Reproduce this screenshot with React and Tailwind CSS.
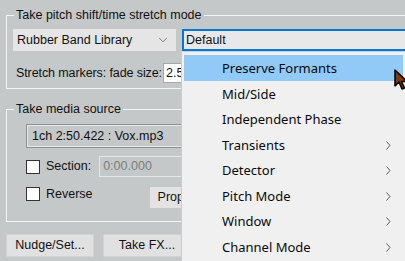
import { ChevronDown } from 'lucide-react';

const menuItems = [
  { label: 'Preserve Formants', active: true },
  { label: 'Mid/Side' },
  { label: 'Independent Phase' },
  { label: 'Transients', sub: true },
  { label: 'Detector', sub: true },
  { label: 'Pitch Mode', sub: true },
  { label: 'Window', sub: true },
  { label: 'Channel Mode', sub: true },
];

function SubArrow() {
  return (
    <svg width="5" height="9" viewBox="0 0 5 9" className="shrink-0">
      <path d="M0.5 0.5 L4 4.5 L0.5 8.5" fill="none" stroke="#5a5a5a" strokeWidth="1" />
    </svg>
  );
}

function CheckBox() {
  return <div className="w-[14px] h-[14px] shrink-0 bg-white border border-[#333]" />;
}

function PopupMenu() {
  return (
    <div className="absolute left-[181px] top-[51px] w-[226px] h-[215px] bg-[#f0f0f0] border border-[#cccccc] pt-[3px] pl-[2px] pr-[3px] font-['Noto_Sans',sans-serif] text-[13px] text-[#0a0a0a]">
      {menuItems.map((m) => (
        <div key={m.label}
          className={`h-[25.5px] flex items-center justify-between pl-[38px] pr-[12px] pt-[2px] leading-none ${m.active ? 'bg-[#91c9f7]' : ''}`}>
          <span>{m.label}</span>
          {m.sub && <SubArrow />}
        </div>
      ))}
    </div>
  );
}

function Cursor() {
  return (
    <svg width="14" height="22" viewBox="0 0 14 22" className="absolute left-[394px] top-[69px]">
      <path d="M1 1 L1 17 L5 13 L8 20 L10.5 19 L7.5 12.5 L13 12.5 Z" fill="#7a3c0c" stroke="#000" strokeWidth="1.5" strokeLinejoin="round" />
    </svg>
  );
}

export default function App() {
  return (
    <div className="relative w-[405px] h-[261px] overflow-hidden bg-[#c4c8c8] font-['Liberation_Sans',Arial,sans-serif] text-[12.5px] text-[#111]">
      <div className="pl-[6px] pt-[7px]">
        <fieldset className="w-[412px] h-[82px] border border-[#f4f4f4]">
          <legend className="ml-[7px] px-[2px] h-[16px] leading-[16px]">Take pitch shift/time stretch mode</legend>
          <div className="flex mt-[6px]">
            <div className="ml-[6px] w-[163px] h-[22px] bg-[#e5e5e5] flex items-center justify-between pl-[4px] pr-[6px]">
              <span>Rubber Band Library</span>
              <ChevronDown size={14} strokeWidth={1.25} className="text-[#555]" />
            </div>
            <div className="ml-[6px] w-[240px] h-[22px] bg-[#e8e8e8] border-2 border-[#0078d7] flex items-center pl-[2px]">
              Default
            </div>
          </div>
          <div className="flex items-center mt-[12px] ml-[9px]">
            <span className="tracking-[-0.1px]">Stretch markers: fade size:</span>
            <div className="ml-[1px] w-[40px] h-[20px] bg-white border border-[#a8a8a8] flex items-center pl-[2px]">2.5</div>
          </div>
        </fieldset>

        <fieldset className="mt-[12px] w-[412px] h-[121px] border border-[#f4f4f4]">
          <legend className="ml-[7px] px-[2px] h-[16px] leading-[16px]">Take media source</legend>
          <div className="mt-[7px] ml-[19px] w-[300px] h-[24px] border border-[#8e9191] shadow-[inset_1px_1px_0_#e8e8e8,inset_-1px_-1px_0_#e8e8e8] flex items-center pl-[5px]">
            1ch 2:50.422 : Vox.mp3
          </div>
          <div className="mt-[8px] ml-[19px] flex items-center h-[21px]">
            <CheckBox />
            <span className="ml-[6px]">Section:</span>
            <div className="ml-[8px] w-[100px] h-[21px] border border-[#e6e6e6] flex items-center pl-[3px] text-[#7c7e7e]">0:00.000</div>
          </div>
          <div className="mt-[10px] ml-[19px] flex items-start">
            <CheckBox />
            <span className="ml-[6px] leading-[14px]">Reverse</span>
            <div className="ml-[57px] w-[70px] h-[21px] bg-[#e3e3e3] flex items-center pl-[8px]">Properties...</div>
          </div>
        </fieldset>

        <div className="flex gap-[9px] mt-[12px]">
          <button className="w-[88px] h-[23px] bg-[#e1e1e1] border border-[#d2d2d2]">Nudge/Set...</button>
          <button className="w-[88px] h-[23px] bg-[#e1e1e1] border border-[#d2d2d2]">Take FX...</button>
        </div>
      </div>
      <PopupMenu />
      <Cursor />
    </div>
  );
}
